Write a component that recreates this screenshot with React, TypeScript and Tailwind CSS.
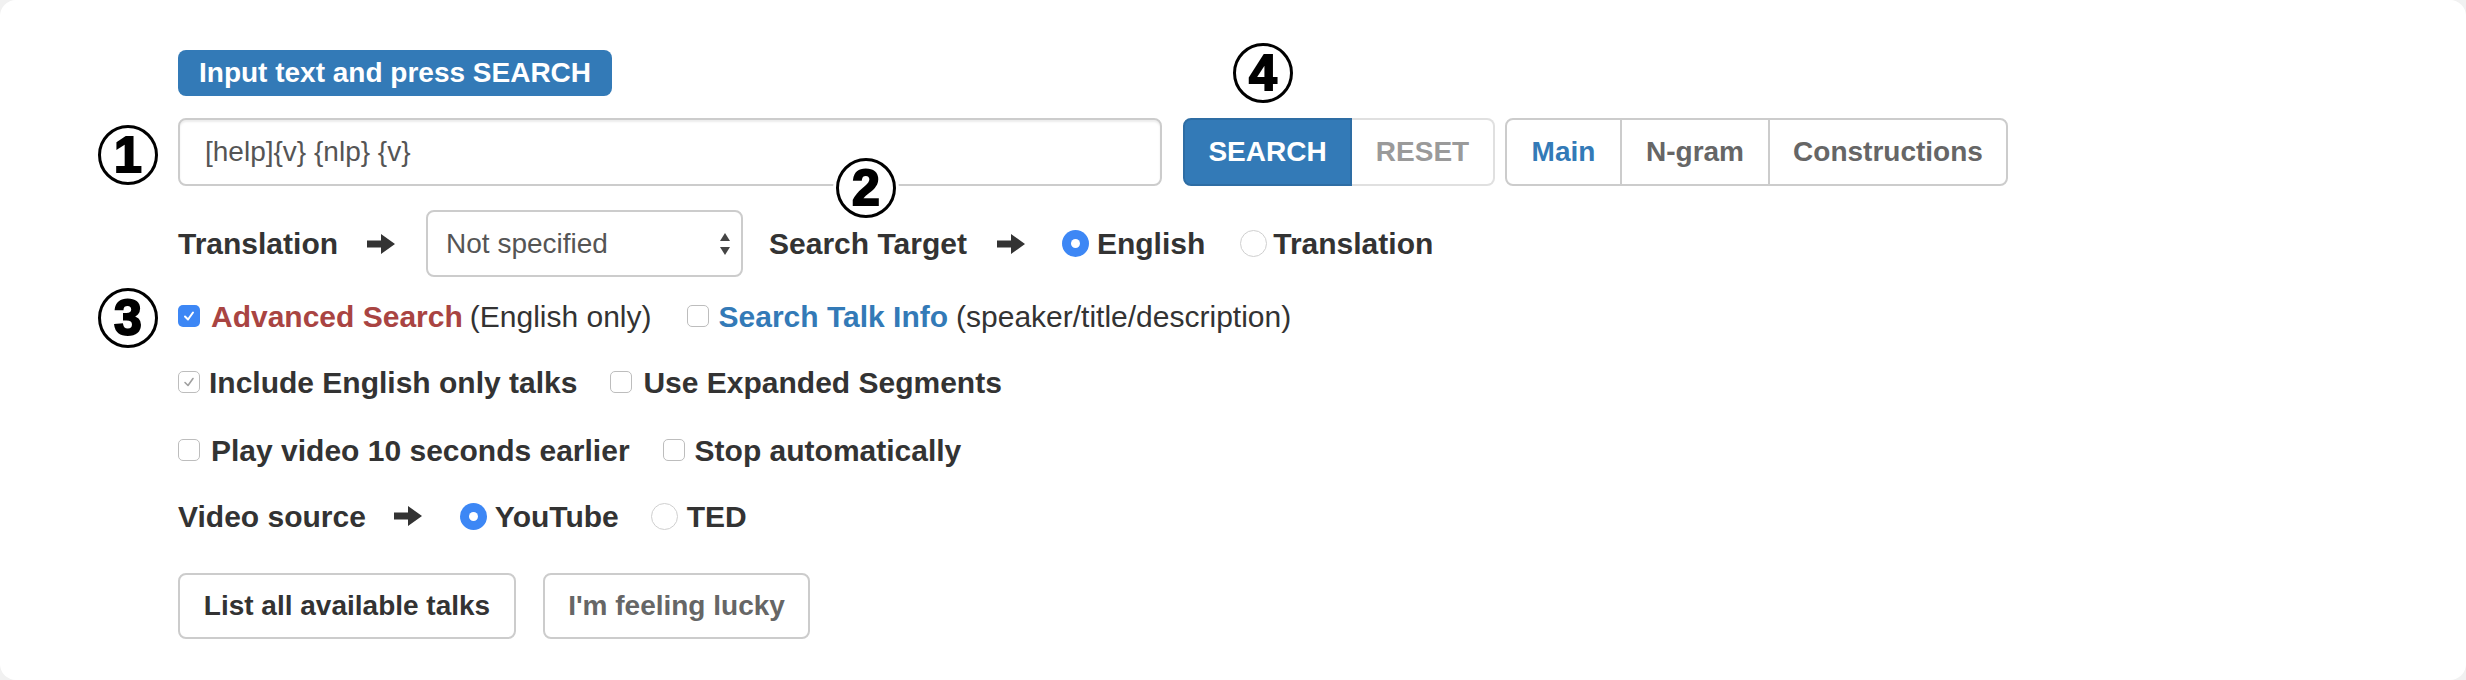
import React from "react";

type Box = "on" | "off" | "disabled";

function CheckBox({ state }: { state: Box }) {
  if (state === "on") {
    return (
      <span className="flex h-[22px] w-[22px] shrink-0 items-center justify-center rounded-[5px] bg-[#3d87f5]">
        <svg width="14" height="14" viewBox="0 0 14 14">
          <path d="M3 7.5 L6 10.5 L11 3.5" fill="none" stroke="#fff" strokeWidth="2" strokeLinecap="round" strokeLinejoin="round" />
        </svg>
      </span>
    );
  }
  return (
    <span className="flex h-[22px] w-[22px] shrink-0 items-center justify-center rounded-[5px] border-[1.5px] border-[#bdbdbd] bg-white">
      {state === "disabled" && (
        <svg width="14" height="14" viewBox="0 0 14 14">
          <path d="M3 7.5 L6 10.5 L11 3.5" fill="none" stroke="#a0a0a0" strokeWidth="1.6" strokeLinecap="round" strokeLinejoin="round" />
        </svg>
      )}
    </span>
  );
}

function Radio({ on }: { on?: boolean }) {
  if (on) {
    return (
      <span className="flex h-[27px] w-[27px] shrink-0 items-center justify-center rounded-full bg-[#3d87f5]">
        <span className="h-[9px] w-[9px] rounded-full bg-white" />
      </span>
    );
  }
  return <span className="block h-[27px] w-[27px] shrink-0 rounded-full border-[1.5px] border-[#cfcfcf] bg-white" />;
}

function Arrow() {
  return (
    <svg width="30" height="22" viewBox="0 0 30 22" className="block shrink-0">
      <path d="M1 7.5 H15 V1 L29 11 L15 21 V14.5 H1 Z" fill="#333" />
    </svg>
  );
}

// numbered marks laid over the form
function Mark({ n, className }: { n: string; className: string }) {
  return (
    <div
      className={
        "absolute flex h-[60px] w-[60px] items-center justify-center rounded-full border-[3px] border-black bg-white text-[50px] font-black leading-none text-black shadow-[0_0_0_3px_#fff] [-webkit-text-stroke:2px_black] " +
        className
      }
    >
      {n}
    </div>
  );
}

export default function App() {
  return (
    <div className="bg-[#f1f1f1] font-['Liberation_Sans',Arial,sans-serif] text-[28px] text-[#333]">
      <div className="relative h-[680px] w-[2466px] rounded-[16px] bg-white pl-[178px] pt-[50px]">
        <div className="flex h-[46px] w-fit items-center rounded-[8px] bg-[#337ab7] px-[21px] font-bold leading-none text-white">
          Input text and press SEARCH
        </div>

        <div className="mt-[22px] flex items-center">
          <div className="flex h-[68px] w-[984px] items-center rounded-[8px] border-2 border-[#ccc] pl-[25px] text-[#555] shadow-[inset_0_2px_2px_rgba(0,0,0,0.075)]">
            [help]{"{v}"} {"{nlp}"} {"{v}"}
          </div>
          <div className="ml-[21px] flex h-[68px] font-bold">
            <button className="h-full w-[169px] rounded-l-[8px] border-2 border-[#2e6da4] bg-[#337ab7] text-white">SEARCH</button>
            <button className="h-full w-[143px] rounded-r-[8px] border-2 border-l-0 border-[#e0e0e0] bg-white text-[#9a9a9a]">RESET</button>
          </div>
          <div className="ml-[10px] flex h-[68px] rounded-[8px] border-2 border-[#ccc] font-bold">
            <div className="flex w-[113px] items-center justify-center text-[#337ab7]">Main</div>
            <div className="flex w-[148px] items-center justify-center border-l-2 border-[#ccc] text-[#666]">N-gram</div>
            <div className="flex w-[238px] items-center justify-center border-l-2 border-[#ccc] text-[#666]">Constructions</div>
          </div>
        </div>

        <div className="mt-[24px] flex items-center text-[30px] font-bold">
          <span>Translation</span>
          <span className="ml-[28px]"><Arrow /></span>
          <div className="relative ml-[30px] flex h-[67px] w-[317px] items-center rounded-[8px] border-2 border-[#ccc] pl-[18px] text-[28px] font-normal text-[#555]">
            Not specified
            <svg width="12" height="24" viewBox="0 0 12 24" className="absolute right-[10px] top-[20px]">
              <path d="M6 1 L11 9 H1 Z" fill="#444" />
              <path d="M6 23 L11 15 H1 Z" fill="#444" />
            </svg>
          </div>
          <span className="ml-[26px]">Search Target</span>
          <span className="ml-[29px]"><Arrow /></span>
          <span className="ml-[36px]"><Radio on /></span>
          <span className="ml-[8px]">English</span>
          <span className="ml-[35px]"><Radio /></span>
          <span className="ml-[6px]">Translation</span>
        </div>

        <div className="mt-[19px] flex h-[40px] items-center text-[30px]">
          <CheckBox state="on" />
          <span className="ml-[11px] font-bold text-[#a94442]">Advanced Search</span>
          <span className="ml-[7px]">(English only)</span>
          <span className="ml-[35px]"><CheckBox state="off" /></span>
          <span className="ml-[10px] font-bold text-[#337ab7]">Search Talk Info</span>
          <span className="ml-[8px]">(speaker/title/description)</span>
        </div>

        <div className="mt-[26px] flex h-[40px] items-center text-[30px] font-bold">
          <CheckBox state="disabled" />
          <span className="ml-[9px]">Include English only talks</span>
          <span className="ml-[33px]"><CheckBox state="off" /></span>
          <span className="ml-[11px]">Use Expanded Segments</span>
        </div>

        <div className="mt-[28px] flex h-[40px] items-center text-[30px] font-bold">
          <CheckBox state="off" />
          <span className="ml-[11px]">Play video 10 seconds earlier</span>
          <span className="ml-[33px]"><CheckBox state="off" /></span>
          <span className="ml-[10px]">Stop automatically</span>
        </div>

        <div className="mt-[26px] flex h-[40px] items-center text-[30px] font-bold">
          <span>Video source</span>
          <span className="ml-[27px]"><Arrow /></span>
          <span className="ml-[37px]"><Radio on /></span>
          <span className="ml-[8px]">YouTube</span>
          <span className="ml-[32px]"><Radio /></span>
          <span className="ml-[9px]">TED</span>
        </div>

        <div className="mt-[37px] flex gap-[27px] font-bold">
          <button className="h-[66px] w-[338px] rounded-[8px] border-2 border-[#ccc] bg-white text-[#333]">List all available talks</button>
          <button className="h-[66px] w-[267px] rounded-[8px] border-2 border-[#ccc] bg-white text-[#666]">I'm feeling lucky</button>
        </div>

        <Mark n="1" className="left-[98px] top-[125px]" />
        <Mark n="2" className="left-[836px] top-[158px]" />
        <Mark n="3" className="left-[98px] top-[288px]" />
        <Mark n="4" className="left-[1233px] top-[43px]" />
      </div>
    </div>
  );
}
